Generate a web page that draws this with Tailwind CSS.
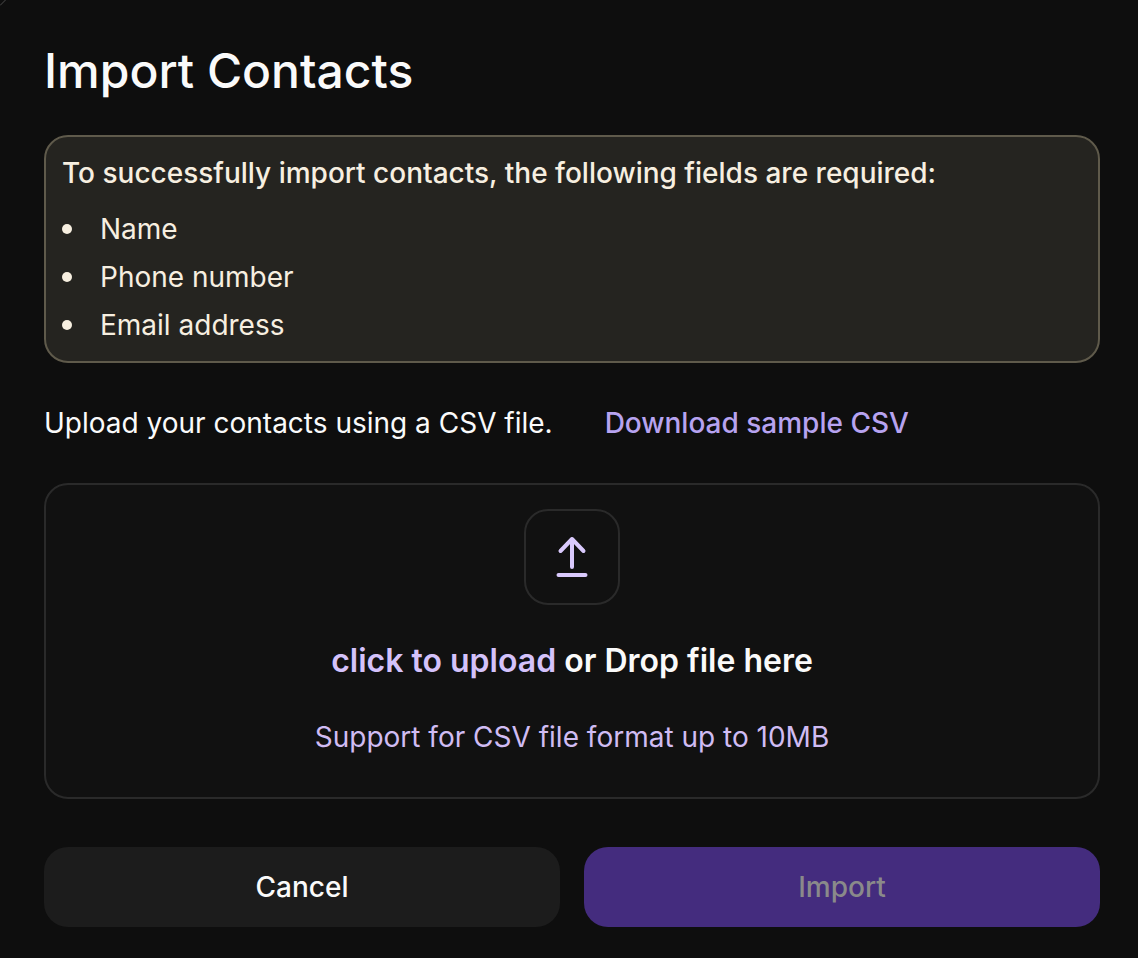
<!DOCTYPE html>
<html><head><script src="https://cdn.jsdelivr.net/npm/@tailwindcss/browser@4"></script></head>
<body class="relative bg-[#0e0e0e] font-['Inter',sans-serif] antialiased w-[1138px] h-[958px] overflow-hidden">
<svg class="absolute left-0 top-0" width="8" height="8" viewBox="0 0 8 8" fill="none" stroke="#4a4a4a" stroke-width="1"><path d="M0 5.5 5.5 0"/></svg>
<div class="pl-11 pr-[38px] pt-[40px]">
<h1 class="text-[48px] leading-[62px] text-[#fafafa] font-medium h-[62px]">Import Contacts</h1>
<div class="mt-[33px] h-[228px] rounded-[24px] border-2 border-[#5f5a4b] bg-[#252420] pl-4 pt-[16px] text-[28px] leading-[40px] text-[#f7efe0]">
<p class="font-medium">To successfully import contacts, the following fields are required:</p>
<ul class="mt-[16px] flex flex-col">
<li class="h-[48px] flex items-start"><span class="mt-[15px] mr-[28px] size-[10px] rounded-full bg-[#f7efe0]"></span>Name</li>
<li class="h-[48px] flex items-start"><span class="mt-[15px] mr-[28px] size-[10px] rounded-full bg-[#f7efe0]"></span>Phone number</li>
<li class="h-[48px] flex items-start"><span class="mt-[15px] mr-[28px] size-[10px] rounded-full bg-[#f7efe0]"></span>Email address</li>
</ul></div>
<div class="mt-[40px] flex gap-[52px] text-[28px] leading-[40px]"><span class="text-[#fafafa]">Upload your contacts using a CSV file.</span><span class="text-[#b7a3f0] font-medium">Download sample CSV</span></div>
<div class="mt-[40px] h-[316px] rounded-[24px] border-2 border-[#2a2a2a] bg-[#111111] flex flex-col items-center pt-[24px]">
<div class="size-[96px] rounded-[24px] border-2 border-[#2a2a2a] flex items-center justify-center">
<svg width="48" height="48" viewBox="0 0 48 48" fill="none" stroke="#d9c9fc" stroke-width="4" stroke-linecap="round" stroke-linejoin="round"><path d="M24 34V6M12.5 18 24 6l11.5 12M10.5 42h27"/></svg></div>
<p class="mt-[36px] text-[32px] leading-[40px] font-semibold text-[#fafafa]"><span class="text-[#d4c2fb]">click to upload</span> or Drop file here</p>
<p class="mt-[36px] text-[28px] leading-[40px] text-[#d0bcf3]">Support for CSV file format up to 10MB</p>
</div>
<div class="mt-[48px] flex gap-6">
<button class="flex-1 h-[80px] rounded-[24px] bg-[#1c1c1c] text-[#fafafa] text-[28px] font-medium">Cancel</button>
<button class="flex-1 h-[80px] rounded-[24px] bg-[#442c7e] text-[#8a8a8a] text-[28px] font-medium">Import</button>
</div>
</div>
</body></html>
